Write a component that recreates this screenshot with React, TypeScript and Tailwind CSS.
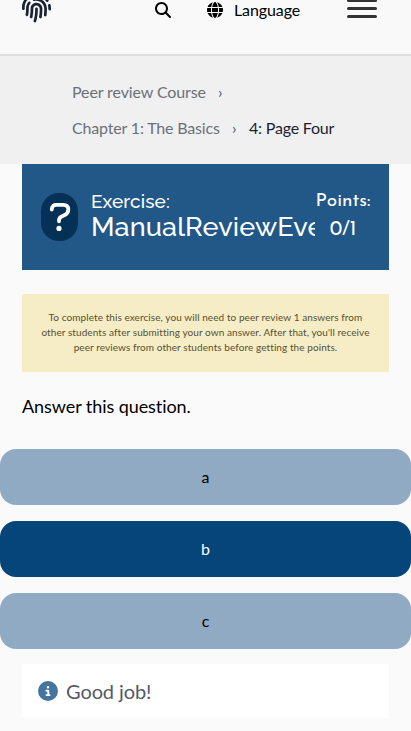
import { FaFingerprint } from "react-icons/fa";
import { FaCircleInfo, FaGlobe, FaMagnifyingGlass } from "react-icons/fa6";

function Header() {
  return (
    <header className="flex h-14 items-start border-b-2 border-[#dddddd] bg-[#f9f9f9] pl-[22px] pr-[34px]">
      <FaFingerprint className="-mt-[7px] h-[30px] w-[29px] shrink-0 text-[#1a2333]" />
      <FaMagnifyingGlass className="ml-[104px] mt-[2px] size-4 shrink-0" />
      <div className="ml-9 flex h-5 items-center gap-[11px]">
        <FaGlobe className="size-4" />
        <span className="text-base leading-5 tracking-[-0.1px]">Language</span>
      </div>
      <div className="-mt-px ml-auto flex w-[30px] flex-col gap-[5px]">
        <span className="h-[3px] rounded-sm bg-[#333333]" />
        <span className="h-[3px] rounded-sm bg-[#333333]" />
        <span className="h-[3px] rounded-sm bg-[#333333]" />
      </div>
    </header>
  );
}

function Breadcrumbs() {
  return (
    <nav className="flex h-[108px] flex-col bg-[#f0f0f0] pl-[72px] pt-[18px] text-base leading-9 text-[#6b7078]">
      <div className="flex">
        <span className="w-[134px] whitespace-nowrap tracking-[-0.11px]">Peer review Course</span>
        <span className="ml-3 text-[#4c5868]">›</span>
      </div>
      <div className="flex">
        <span className="w-[148px] whitespace-nowrap tracking-[-0.17px]">Chapter 1: The Basics</span>
        <span className="ml-3 w-[5px] text-[#4c5868]">›</span>
        <span className="ml-3 tracking-[-0.2px] text-[#1a2333]">4: Page Four</span>
      </div>
    </nav>
  );
}

function ExerciseHeader() {
  return (
    <div className="mx-[22px] flex h-[106px] bg-[#215887] pl-[19px] pt-[29px] text-white">
      <div className="flex h-12 w-[37px] shrink-0 items-center justify-center rounded-[18px] bg-[#063157]">
        <svg viewBox="0 0 22 30" className="h-[30px] w-[22px]" fill="none">
          <path
            d="M2.8 7.6V6.8Q3.4 2.8 7.2 2.8H14.2Q19.3 2.8 19.3 7.5Q19.3 11.4 15.8 13L12.2 14.7Q10 15.8 10 18.6V19.3"
            stroke="white"
            strokeWidth="3.8"
            strokeLinecap="round"
          />
          <circle cx="10" cy="26.4" r="2.6" fill="white" />
        </svg>
      </div>
      <div className="ml-[13px] w-[224px] shrink-0 overflow-hidden whitespace-nowrap font-['Raleway','Lato',sans-serif] font-medium">
        <div className="-mt-[4px] text-[19px] leading-6 tracking-[0.1px]">Exercise:</div>
        <div className="-mt-[2px] text-[27px] leading-[32px] tracking-[0.13px]">ManualReviewEve</div>
      </div>
      <div className="w-[56px] whitespace-nowrap text-center font-['Josefin_Sans','Lato',sans-serif]">
        <div className="-mt-[3px] text-[19px] leading-6">Points:</div>
        <div className="mt-[4px] text-[20px] leading-6">0/1</div>
      </div>
    </div>
  );
}

const options = [
  { label: "a", selected: false },
  { label: "b", selected: true },
  { label: "c", selected: false },
];

export default function App() {
  return (
    <div className="h-[731px] overflow-hidden bg-[#fafafa] font-['Lato',sans-serif] text-black">
      <Header />
      <Breadcrumbs />
      <ExerciseHeader />
      <p className="mx-[22px] mt-6 h-[78px] whitespace-nowrap bg-[#f6ecc6] pt-4 text-center text-[10px] leading-[15px] tracking-[0.08px] text-[#57512f]">
        To complete this exercise, you will need to peer review 1 answers from
        <br />
        other students after submitting your own answer. After that, you'll receive
        <br />
        peer reviews from other students before getting the points.
      </p>
      <p className="mt-[19px] px-[22px] text-lg leading-[30px] tracking-[-0.07px]">Answer this question.</p>
      <div className="mt-[28px] flex flex-col gap-4">
        {options.map(({ label, selected }) => (
          <button
            key={label}
            className={
              selected
                ? "h-14 rounded-2xl bg-[#06457a] text-base text-white"
                : "h-14 rounded-2xl bg-[#91aac4] text-base text-black"
            }
          >
            {label}
          </button>
        ))}
      </div>
      <div className="mx-[22px] mt-[15px] flex h-[54px] items-center gap-2 bg-white pl-4 text-xl text-[#535a66]">
        <FaCircleInfo className="size-5 text-[#44749f]" />
        <span className="tracking-[-0.1px]">Good job!</span>
      </div>
    </div>
  );
}
